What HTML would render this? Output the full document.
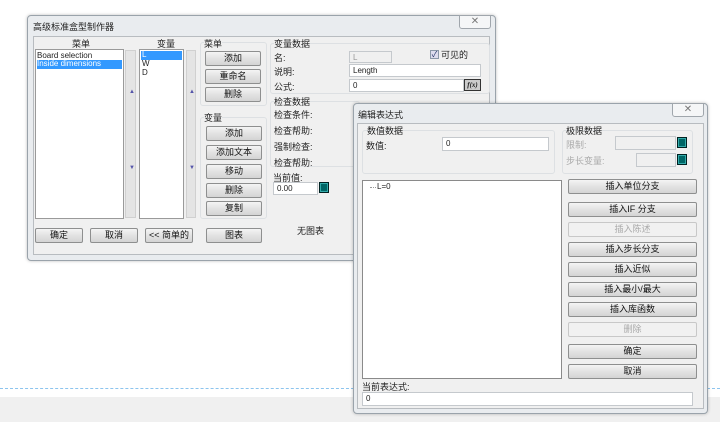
<!DOCTYPE html>
<html><head><meta charset="utf-8"><style>
*{box-sizing:border-box;margin:0;padding:0}
body{width:720px;height:422px;position:relative;overflow:hidden;background:#fff;font-family:"Liberation Sans","Noto Sans CJK SC",sans-serif;font-size:9px;color:#222}
.a{position:absolute}
.dlg{position:absolute;background:#e9ecef;border:1px solid #9aa3ab;border-radius:4px;box-shadow:0 0 3px rgba(0,0,0,.25)}
.in{position:absolute;background:#f0f0f0;border:1px solid #b8bcc0}
.btn{position:absolute;border:1px solid #8e8f8f;border-radius:2px;background:linear-gradient(#f4f4f4,#e2e2e2 50%,#d4d4d4);text-align:center;font-size:9px;line-height:13px;color:#111}
.btn.dis{color:#aaa;border-color:#c8c8c8;background:#f1f1f1}
.box{position:absolute;background:#fff;border:1px solid #9a9a9a}
.grp{position:absolute;border:1px solid #dde0e3;border-radius:3px}
.lbl{position:absolute;white-space:nowrap}
.tf{position:absolute;background:#fff;border:1px solid #c5c9cd;font-size:8px;line-height:11px;padding-left:3px}
.x{position:absolute;width:32px;height:14px;border:1px solid #a0a6ac;border-radius:0 0 3px 3px;background:#f5f6f7;text-align:center;font-size:10px;line-height:12px;color:#777}
.teal{position:absolute;width:10px;height:11px;background:#066;border:1px solid #022;box-shadow:inset 0 0 0 1px #3aa}
.sb{position:absolute;background:#e4e4e4;border:1px solid #d0d0d0}
</style></head><body>
<div class="a" style="left:0;top:388px;width:720px;border-top:1px dashed #8cc4ee"></div>
<div class="a" style="left:0;top:397px;width:720px;height:25px;background:#f0f0f0"></div>

<div class="dlg" style="left:27px;top:15px;width:469px;height:246px">
 <div class="x" style="left:431px;top:-1px">✕</div>
</div>
<div class="lbl" style="left:33px;top:20px;font-size:9px">高级标准盒型制作器</div>
<div class="in" style="left:33px;top:36px;width:457px;height:219px"></div>
<div class="lbl" style="left:72px;top:37px">菜单</div>
<div class="lbl" style="left:157px;top:37px">变量</div>
<div class="box" style="left:35px;top:49px;width:89px;height:170px">
 <div class="lbl" style="left:1px;top:1px;font-size:8px">Board selection</div>
 <div class="a" style="left:1px;top:10px;width:85px;height:9px;background:#3399ff"></div>
 <div class="lbl" style="left:1px;top:9px;font-size:8px;color:#fff">Inside dimensions</div>
</div>
<div class="sb" style="left:125px;top:50px;width:11px;height:168px"><div class="lbl" style="left:3px;top:38px;font-size:6px;color:#55a">▲</div><div class="lbl" style="left:3px;top:114px;font-size:6px;color:#55a">▼</div></div>
<div class="box" style="left:139px;top:49px;width:45px;height:170px">
 <div class="a" style="left:1px;top:1px;width:41px;height:9px;background:#3399ff"></div>
 <div class="lbl" style="left:2px;top:0px;font-size:8px;color:#fff">L</div>
 <div class="lbl" style="left:2px;top:9px;font-size:8px">W</div>
 <div class="lbl" style="left:2px;top:18px;font-size:8px">D</div>
</div>
<div class="sb" style="left:186px;top:50px;width:10px;height:168px"><div class="lbl" style="left:2px;top:38px;font-size:6px;color:#55a">▲</div><div class="lbl" style="left:2px;top:114px;font-size:6px;color:#55a">▼</div></div>

<div class="grp" style="left:200px;top:42px;width:67px;height:64px"></div>
<div class="lbl" style="left:204px;top:37px;background:#f0f0f0">菜单</div>
<div class="btn" style="left:205px;top:51px;width:56px;height:15px">添加</div>
<div class="btn" style="left:205px;top:69px;width:56px;height:15px">重命名</div>
<div class="btn" style="left:205px;top:87px;width:56px;height:15px">删除</div>
<div class="grp" style="left:200px;top:117px;width:67px;height:102px"></div>
<div class="lbl" style="left:204px;top:111px;background:#f0f0f0">变量</div>
<div class="btn" style="left:206px;top:126px;width:56px;height:15px">添加</div>
<div class="btn" style="left:206px;top:145px;width:56px;height:15px">添加文本</div>
<div class="btn" style="left:206px;top:164px;width:56px;height:15px">移动</div>
<div class="btn" style="left:206px;top:183px;width:56px;height:15px">删除</div>
<div class="btn" style="left:206px;top:201px;width:56px;height:15px">复制</div>
<div class="btn" style="left:35px;top:228px;width:48px;height:15px">确定</div>
<div class="btn" style="left:90px;top:228px;width:48px;height:15px">取消</div>
<div class="btn" style="left:145px;top:228px;width:48px;height:15px">&lt;&lt; 简单的</div>
<div class="btn" style="left:206px;top:228px;width:56px;height:15px">图表</div>
<div class="lbl" style="left:297px;top:224px">无图表</div>

<div class="grp" style="left:270px;top:43px;width:220px;height:51px"></div>
<div class="lbl" style="left:274px;top:37px;background:#f0f0f0">变量数据</div>
<div class="lbl" style="left:274px;top:51px">名:</div>
<div class="tf" style="left:349px;top:51px;width:43px;height:12px;background:#f0f0f0;color:#999">L</div>
<div class="a" style="left:430px;top:50px;width:9px;height:9px;border:1px solid #8a98a8;background:#dde;font-size:8px;line-height:7px;color:#236;text-align:center">✓</div>
<div class="lbl" style="left:441px;top:48px">可见的</div>
<div class="lbl" style="left:274px;top:65px">说明:</div>
<div class="tf" style="left:349px;top:64px;width:132px;height:13px">Length</div>
<div class="lbl" style="left:274px;top:80px">公式:</div>
<div class="tf" style="left:349px;top:79px;width:115px;height:13px">0</div>
<div class="a" style="left:464px;top:79px;width:17px;height:12px;border:1px solid #333;background:#ccc;font-size:7px;font-style:italic;font-weight:bold;font-family:'Liberation Serif',serif;text-align:center;line-height:10px">f(x)</div>
<div class="grp" style="left:270px;top:101px;width:90px;height:66px"></div>
<div class="lbl" style="left:274px;top:95px;background:#f0f0f0">检查数据</div>
<div class="lbl" style="left:274px;top:108px">检查条件:</div>
<div class="lbl" style="left:274px;top:124px">检查帮助:</div>
<div class="lbl" style="left:274px;top:140px">强制检查:</div>
<div class="lbl" style="left:274px;top:156px">检查帮助:</div>
<div class="lbl" style="left:273px;top:171px">当前值:</div>
<div class="tf" style="left:273px;top:182px;width:45px;height:13px">0.00</div>
<div class="teal" style="left:319px;top:182px"></div>

<div class="dlg" style="left:353px;top:103px;width:355px;height:311px">
 <div class="x" style="left:318px;top:-1px">✕</div>
</div>
<div class="lbl" style="left:358px;top:108px;font-size:9px">编辑表达式</div>
<div class="in" style="left:357px;top:123px;width:347px;height:286px"></div>
<div class="grp" style="left:362px;top:130px;width:193px;height:44px"></div>
<div class="lbl" style="left:367px;top:124px">数值数据</div>
<div class="lbl" style="left:366px;top:139px">数值:</div>
<div class="tf" style="left:442px;top:137px;width:107px;height:14px">0</div>
<div class="grp" style="left:562px;top:130px;width:131px;height:44px"></div>
<div class="lbl" style="left:566px;top:124px">极限数据</div>
<div class="lbl" style="left:566px;top:138px;color:#aaa">限制:</div>
<div class="tf" style="left:615px;top:136px;width:61px;height:14px;background:#f0f0f0"></div>
<div class="teal" style="left:677px;top:137px"></div>
<div class="lbl" style="left:566px;top:154px;color:#aaa">步长变量:</div>
<div class="tf" style="left:636px;top:153px;width:40px;height:14px;background:#f0f0f0"></div>
<div class="teal" style="left:677px;top:154px"></div>
<div class="box" style="left:362px;top:180px;width:200px;height:199px;border-color:#8a8a8a">
 <div class="a" style="left:7px;top:6px;width:6px;border-top:1px dotted #999"></div>
 <div class="lbl" style="left:14px;top:1px;font-size:8px">L=0</div>
</div>
<div class="btn" style="left:568px;top:179px;width:129px;height:15px">插入单位分支</div>
<div class="btn" style="left:568px;top:202px;width:129px;height:15px">插入IF 分支</div>
<div class="btn dis" style="left:568px;top:222px;width:129px;height:15px">插入陈述</div>
<div class="btn" style="left:568px;top:242px;width:129px;height:15px">插入步长分支</div>
<div class="btn" style="left:568px;top:262px;width:129px;height:15px">插入近似</div>
<div class="btn" style="left:568px;top:282px;width:129px;height:15px">插入最小/最大</div>
<div class="btn" style="left:568px;top:302px;width:129px;height:15px">插入库函数</div>
<div class="btn dis" style="left:568px;top:322px;width:129px;height:15px">删除</div>
<div class="btn" style="left:568px;top:344px;width:129px;height:15px">确定</div>
<div class="btn" style="left:568px;top:364px;width:129px;height:15px">取消</div>
<div class="lbl" style="left:362px;top:380px">当前表达式:</div>
<div class="tf" style="left:362px;top:392px;width:331px;height:14px">0</div>
</body></html>
